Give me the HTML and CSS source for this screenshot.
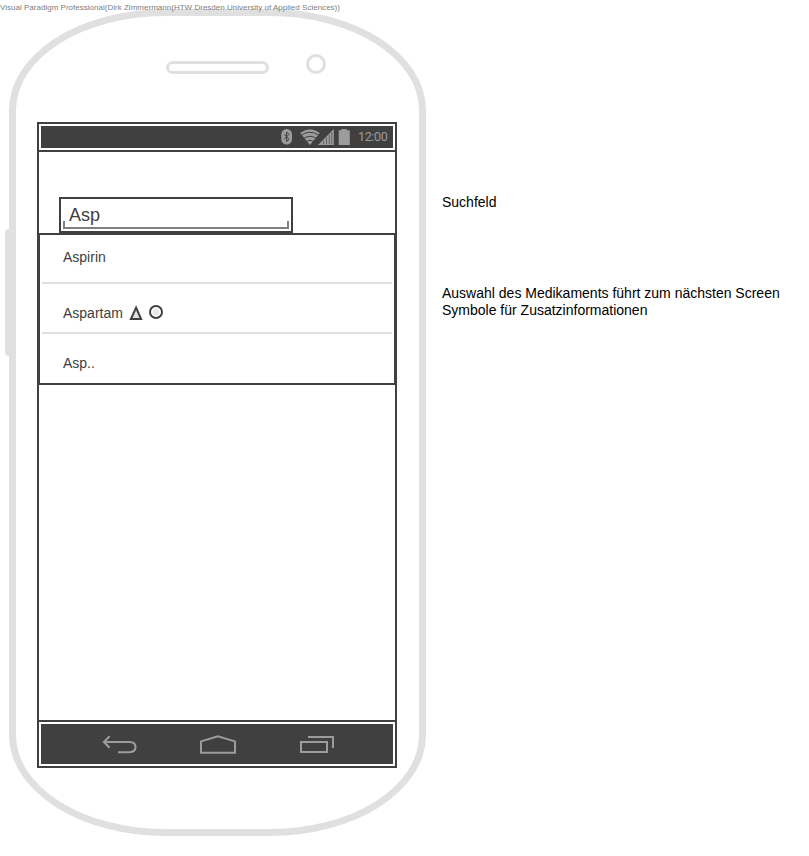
FILE: index.html
```html
<!DOCTYPE html>
<html lang="de">
<head>
<meta charset="utf-8">
<title>Suchfeld Wireframe</title>
<link rel="stylesheet" href="styles.css">
</head>
<body>
<p class="watermark">Visual Paradigm Professional(Dirk Zimmermann(HTW Dresden University of Applied Sciences))</p>
<main class="board">
  <section class="phone">
    <span class="side-button"></span>
    <header class="phone-top">
      <span class="speaker"></span>
      <span class="camera"></span>
    </header>
    <div class="screen">
      <div class="status-bar">
        <svg class="status-icons" width="72" height="18" viewBox="280 128 72 18">
          <rect x="281.3" y="129" width="10.7" height="15.6" rx="5.2" fill="#9c9c9c"/>
          <path d="M284.2 134.3l4.7 4.9-2.3 2.4v-9.6l2.3 2.4-4.7 4.9" fill="none" stroke="#404040" stroke-width="1"/>
          <path d="M300.2 132.9q9.8-7.4 19.6 0l-9.8 12z" fill="#9c9c9c"/>
          <g fill="none" stroke="#404040" stroke-width="1">
            <path d="M301 135.4q9-6.4 18 0"/>
            <path d="M303.4 138.6q6.6-4.6 13.2 0"/>
            <path d="M305.6 141.6q4.4-2.8 8.8 0"/>
          </g>
          <path d="M318 145l15.8-16v16z" fill="#9c9c9c"/>
          <path d="M323.5 140.6v3.6M326.5 137.6v6.6M329.3 134.8v9.4M331.8 132.4v11.8" stroke="#404040" stroke-width=".6"/>
          <path d="M338.7 130.3h2.7v-1.4h5.2v1.4h3.2v14.7h-11.1z" fill="#9c9c9c"/>
        </svg>
        <span class="clock">12:00</span>
      </div>
      <div class="content">
        <div class="search"><div class="search-input">Asp</div></div>
        <ul class="results">
          <li class="first">Aspirin</li>
          <li>Aspartam
            <svg class="symbols" width="36" height="18" viewBox="128 304 36 18">
              <path d="M136.1 307.6l5 11.5h-10.2z" fill="#dfdfdf" stroke="#404040" stroke-width="2"/>
              <circle cx="156" cy="312" r="6" fill="#fff" stroke="#404040" stroke-width="2"/>
              <circle cx="156" cy="312" r="3.3" fill="#e8e8e8"/>
            </svg>
          </li>
          <li class="last">Asp..</li>
        </ul>
      </div>
      <nav class="nav-bar">
        <svg width="352" height="40" viewBox="41 724 352 40" fill="none" stroke="#9c9c9c" stroke-width="2">
          <path d="M109.6 736.2l-5.7 5.8 5.7 5.7M104 742h25.5q6 0 6 5.1t-6 5.1H118"/>
          <path d="M201 752.8v-11.4l16.8-5 17.2 5v11.4z"/>
          <path d="M301 742h26v10h-26zM308 737h25v11"/>
        </svg>
      </nav>
    </div>
  </section>
  <aside class="notes">
    <p>Suchfeld</p>
    <p class="note-list">Auswahl des Medikaments führt zum nächsten Screen<br>Symbole für Zusatzinformationen</p>
  </aside>
</main>
</body>
</html>
```
FILE: styles.css
```css
* { box-sizing: border-box; margin: 0; padding: 0; }
body {
  background: #fff;
  font: 14px/17px "Liberation Sans", Arial, sans-serif;
  color: #000;
}
svg { display: block; }
.watermark {
  position: absolute;
  left: 0;
  top: 3px;
  z-index: 1;
  font-size: 8px;
  line-height: 10px;
  letter-spacing: 0.015px;
  color: #808080;
  white-space: nowrap;
}
.board { display: flex; height: 856px; padding: 9px 0 0 9px; }
.phone {
  position: relative;
  flex: none;
  width: 417px;
  height: 827px;
  border: 7px solid #e0e0e0;
  border-radius: 156px / 101px;
  padding-left: 21px;
}
.side-button {
  position: absolute;
  left: -11px;
  top: 213px;
  width: 5px;
  height: 127px;
  background: #e0e0e0;
  border-radius: 4px 0 0 4px;
}
.phone-top {
  display: flex;
  align-items: flex-end;
  height: 58px;
  padding-left: 129px;
  gap: 37px;
}
.speaker { width: 103px; height: 13px; border: 3px solid #e0e0e0; border-radius: 7px; }
.camera { width: 20px; height: 20px; border: 3px solid #e0e0e0; border-radius: 50%; }
.screen {
  display: flex;
  flex-direction: column;
  width: 360px;
  height: 646px;
  margin-top: 48px;
  border: 2px solid #404040;
}
.status-bar {
  display: flex;
  justify-content: flex-end;
  align-items: center;
  height: 26px;
  border: 2px solid #fff;
  background: #404040;
  padding-right: 5px;
  gap: 6px;
}
.clock {
  width: 30px;
  font: 12.5px/22px Roboto, sans-serif;
  letter-spacing: -0.35px;
  color: #9c9c9c;
  white-space: nowrap;
}
.content {
  flex: 1;
  border: solid #404040;
  border-width: 2px 0;
  padding-top: 45px;
  color: #404040;
}
.search {
  width: 234px;
  height: 36px;
  margin-left: 20px;
  border: 2px solid #404040;
  padding: 2px;
}
.search-input {
  height: 28px;
  padding: 4px 6px 0;
  font-size: 18px;
  line-height: 20px;
  border-bottom: 2px solid #808080;
  background: linear-gradient(#808080, #808080) left bottom / 2px 6px no-repeat,
    linear-gradient(#808080, #808080) right bottom / 2px 6px no-repeat;
}
.results {
  list-style: none;
  width: 358px;
  height: 152px;
  margin-left: -1px;
  border: 2px solid #404040;
  padding: 0 2px;
}
.results li {
  display: flex;
  align-items: flex-end;
  gap: 5px;
  height: 50px;
  padding: 0 0 10px 21px;
  border-bottom: 2px solid #dfdfdf;
}
.results .first { height: 49px; padding-bottom: 16px; }
.results .last { height: 48px; border-bottom: 0; }
.nav-bar { height: 44px; border: 2px solid #fff; background: #404040; }
.notes { padding: 185px 0 0 16px; white-space: nowrap; }
.note-list { margin-top: 74px; }
```
